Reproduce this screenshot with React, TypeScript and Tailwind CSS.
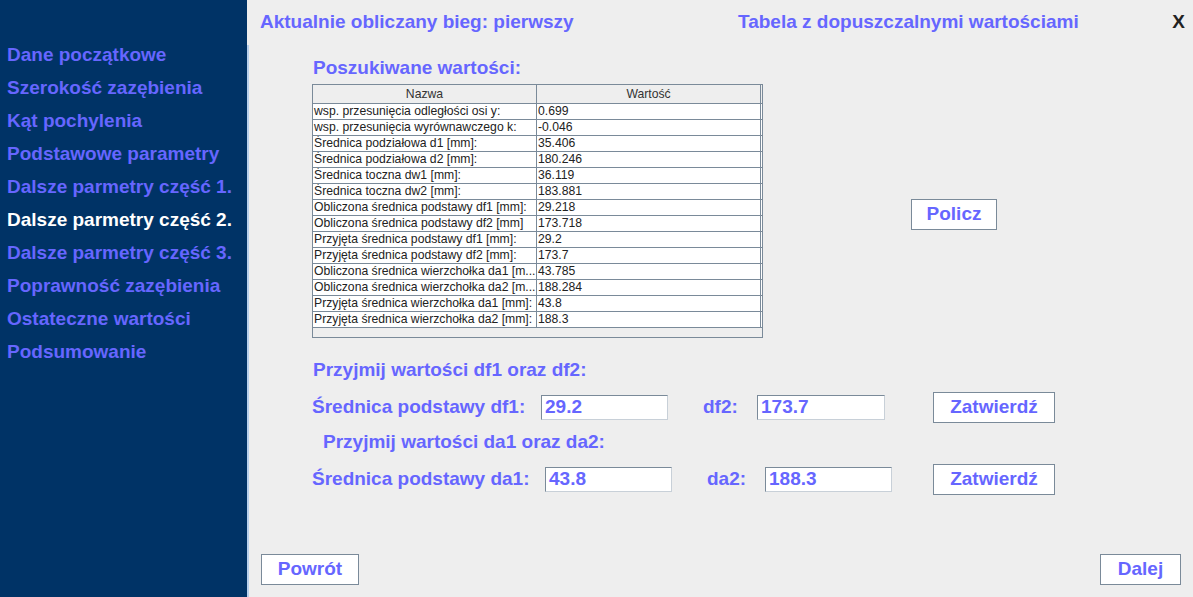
import React from 'react';

const navItems = [
  'Dane początkowe',
  'Szerokość zazębienia',
  'Kąt pochylenia',
  'Podstawowe parametry',
  'Dalsze parmetry część 1.',
  'Dalsze parmetry część 2.',
  'Dalsze parmetry część 3.',
  'Poprawność zazębienia',
  'Ostateczne wartości',
  'Podsumowanie',
];

const rows: [string, string][] = [
  ['wsp. przesunięcia odległości osi y:', '0.699'],
  ['wsp. przesunięcia wyrównawczego k:', '-0.046'],
  ['Średnica podziałowa d1 [mm]:', '35.406'],
  ['Średnica podziałowa d2 [mm]:', '180.246'],
  ['Średnica toczna dw1 [mm]:', '36.119'],
  ['Średnica toczna dw2 [mm]:', '183.881'],
  ['Obliczona średnica podstawy df1 [mm]:', '29.218'],
  ['Obliczona średnica podstawy df2 [mm]', '173.718'],
  ['Przyjęta średnica podstawy df1 [mm]:', '29.2'],
  ['Przyjęta średnica podstawy df2 [mm]:', '173.7'],
  ['Obliczona średnica wierzchołka da1 [m...', '43.785'],
  ['Obliczona średnica wierzchołka da2 [m...', '188.284'],
  ['Przyjęta średnica wierzchołka da1 [mm]:', '43.8'],
  ['Przyjęta średnica wierzchołka da2 [mm]:', '188.3'],
];

const bold = "font-['Liberation_Sans',Arial,sans-serif] font-bold text-[19px] text-[#6666ff]";

function SwingButton({ label, className }: { label: string; className?: string }) {
  return (
    <button
      className={`${bold} flex h-[31px] items-center justify-center border border-[#7a8a99] bg-white ${className ?? ''}`}
    >
      {label}
    </button>
  );
}

function Field({ value, className }: { value: string; className?: string }) {
  return (
    <div
      className={`${bold} flex h-[25px] items-center border border-[#7a8a99] border-r-[#c8d0d8] border-b-[#c8d0d8] bg-white pl-[3px] ${className ?? ''}`}
    >
      {value}
    </div>
  );
}

function ValuesTable() {
  return (
    <div className="flex h-[254px] w-[451px] flex-col border border-[#7a8a99] bg-[#eeeeee] font-['Liberation_Sans',Arial,sans-serif] text-[12.2px] text-[#222]">
      <div className="grid h-[19px] grid-cols-[224px_1fr] border-b border-[#7a8a99] bg-[#eeeeee]">
        <div className="flex items-center justify-center border-r border-[#7a8a99] text-[#333]">Nazwa</div>
        <div className="mr-[1px] flex items-center justify-center border-r border-[#7a8a99] text-[#333]">Wartość</div>
      </div>
      <div className="bg-white">
        {rows.map(([name, value]) => (
          <div key={name} className="grid h-[16px] grid-cols-[224px_1fr] border-b border-[#7a8a99]">
            <div className="overflow-hidden whitespace-nowrap border-r border-[#7a8a99] pl-[1px] leading-[15px]">{name}</div>
            <div className="mr-[1px] border-r border-[#7a8a99] pl-[1px] leading-[15px]">{value}</div>
          </div>
        ))}
      </div>
    </div>
  );
}

export default function App() {
  return (
    <div className="flex h-[597px] w-[1193px] overflow-hidden bg-[#eeeeee]">
      <aside className="flex w-[247px] shrink-0 flex-col bg-[#003366] pt-[38px]">
        {navItems.map((item) => (
          <div
            key={item}
            className={`${bold} h-[33px] whitespace-nowrap pl-[7px] leading-[33px] ${
              item === 'Dalsze parmetry część 2.' ? 'text-white' : ''
            }`}
          >
            {item}
          </div>
        ))}
      </aside>

      <main className="flex flex-1 flex-col">
        <header className="flex h-[45px] items-center pl-[13px] pr-[8px]">
          <div className={`${bold} w-[478px]`}>Aktualnie obliczany bieg: pierwszy</div>
          <div className={`${bold} flex-1`}>Tabela z dopuszczalnymi wartościami</div>
          <div className="font-['Liberation_Sans',Arial,sans-serif] text-[19px] font-bold text-[#222]">X</div>
        </header>

        <section className="flex flex-1 flex-col border-l-2 border-[#b8d0ec]">
          <div className={`${bold} ml-[64px] mt-[12px] h-[22px] leading-[22px]`}>Poszukiwane wartości:</div>

          <div className="ml-[63px] mt-[5px] flex items-start">
            <ValuesTable />
            <SwingButton label="Policz" className="ml-[148px] mt-[115px] w-[86px]" />
          </div>

          <div className={`${bold} ml-[64px] mt-[21px] h-[22px] leading-[22px]`}>Przyjmij wartości df1 oraz df2:</div>

          <div className="ml-[63px] mt-[11px] flex h-[31px] items-center">
            <div className={`${bold} w-[229px]`}>Średnica podstawy df1:</div>
            <Field value="29.2" className="w-[127px]" />
            <div className={`${bold} ml-[35px] w-[54px]`}>df2:</div>
            <Field value="173.7" className="w-[128px]" />
            <SwingButton label="Zatwierdź" className="ml-[48px] w-[122px]" />
          </div>

          <div className={`${bold} ml-[74px] mt-[8px] h-[22px] leading-[22px]`}>Przyjmij wartości da1 oraz da2:</div>

          <div className="ml-[63px] mt-[11px] flex h-[31px] items-center">
            <div className={`${bold} w-[233px]`}>Średnica podstawy da1:</div>
            <Field value="43.8" className="w-[127px]" />
            <div className={`${bold} ml-[35px] w-[58px]`}>da2:</div>
            <Field value="188.3" className="w-[127px]" />
            <SwingButton label="Zatwierdź" className="ml-[41px] w-[122px]" />
          </div>

          <div className="mt-auto mb-[12px] flex justify-between pl-[12px] pr-[12px]">
            <SwingButton label="Powrót" className="w-[98px]" />
            <SwingButton label="Dalej" className="w-[81px]" />
          </div>
        </section>
      </main>
    </div>
  );
}
